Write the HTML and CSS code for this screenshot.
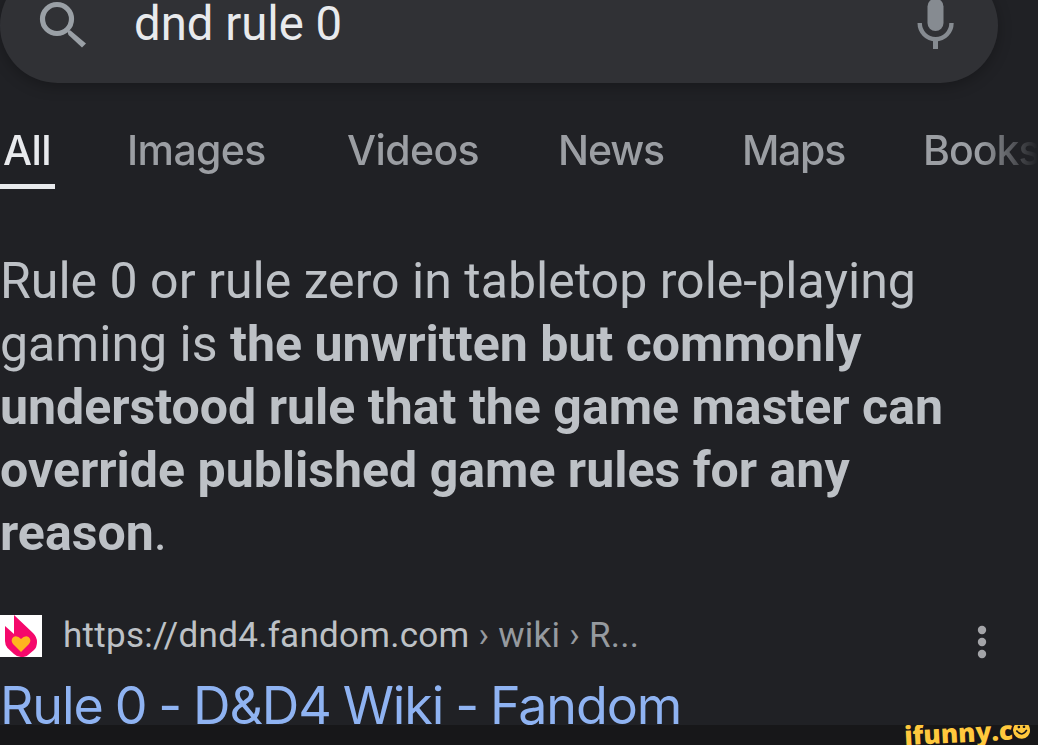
FILE: index.html
```html
<!DOCTYPE html>
<html lang="en">
<head>
    <meta charset="UTF-8">
    <meta name="viewport" content="width=device-width, initial-scale=1.0">
    <title>dnd rule 0</title>
    <link rel="stylesheet" href="styles.css">
</head>
<body>
    <div class="search-bar">
        <svg class="search-icon" width="48" height="48" viewBox="0 0 48 48">
            <circle cx="19" cy="19" r="14.5" fill="none" stroke="#9aa0a6" stroke-width="5.2"/>
            <path d="M29 30 L32.5 30.5 L48 43.5 L44 47.5 L30.5 35 Z" fill="#9aa0a6"/>
        </svg>
        <span class="query">dnd rule 0</span>
        <svg class="mic-icon" width="38" height="56" viewBox="0 0 38 56">
            <rect x="10.5" y="4.5" width="16" height="32.5" rx="8" fill="#868b91"/>
            <path d="M2.7 29 A15.9 16.2 0 0 0 34.5 29" fill="none" stroke="#868b91" stroke-width="4.4"/>
            <path d="M18.5 44 V55" stroke="#868b91" stroke-width="5"/>
        </svg>
    </div>

    <nav class="tabs">
        <a class="tab active">All</a>
        <a class="tab images">Images</a>
        <a class="tab videos">Videos</a>
        <a class="tab news">News</a>
        <a class="tab maps">Maps</a>
        <a class="tab books">Books</a>
    </nav>

    <main>
        <p class="snippet">
            <span class="line">Rule 0 or rule zero in tabletop role-playing</span>
            <span class="line">gaming is <b>the unwritten but commonly</b></span>
            <span class="line"><b>understood rule that the game master can</b></span>
            <span class="line"><b>override published game rules for any</b></span>
            <span class="line"><b>reason</b>.</span>
        </p>
        <div class="source">
            <svg class="favicon" width="42" height="42" viewBox="0 0 42 42">
                <rect width="42" height="42" fill="#fff"/>
                <path d="M14 0 L33 18 Q37 22 37 27 Q37 32 34 35 L28 40 Q26 42 21 42 Q17 42 14 39 L7.5 33 Q5 30 5 26 V11 L14 19 Z" fill="#f5086b"/>
                <path d="M21 37 L13 29 Q10 25 13.5 22 Q17 20 21 24 Q25 20 28.5 22 Q32 25 29 29 Z" fill="#ffb41f"/>
            </svg>
            <span class="url">https://dnd4.fandom.com <span class="crumbs">› wiki › R...</span></span>
            <svg class="more" width="10" height="34" viewBox="0 0 10 34" fill="#a3a4a8">
                <circle cx="5" cy="5" r="4.2"/>
                <circle cx="5" cy="17" r="4.2"/>
                <circle cx="5" cy="29" r="4.2"/>
            </svg>
        </div>
        <h3 class="title">Rule 0 - D&amp;D4 Wiki - Fandom</h3>
    </main>

    <footer class="footer">
        <div class="brand">
            <span class="brand-text">ifunny.c</span>
            <svg class="smiley" width="18" height="18" viewBox="0 0 18 18">
                <circle cx="9" cy="9" r="9" fill="#ffc83d"/>
                <circle cx="6.3" cy="5.6" r="1.4" fill="#171719"/>
                <circle cx="11.7" cy="5.6" r="1.4" fill="#171719"/>
                <path d="M3.5 9 Q9 17 14.5 9" fill="none" stroke="#171719" stroke-width="1.6"/>
            </svg>
        </div>
    </footer>
</body>
</html>
```
FILE: styles.css
```css
* {
    box-sizing: border-box;
}
body {
    margin: 0;
    width: 1038px;
    height: 745px;
    overflow: hidden;
    display: flex;
    flex-direction: column;
    background: #202125;
    font-family: Roboto, sans-serif;
    color: #bdc1c6;
}
.search-bar {
    flex: none;
    display: flex;
    align-items: flex-start;
    width: 998px;
    height: 115px;
    margin-top: -32px;
    padding: 32px 43px 0 38px;
    background: #303135;
    border-radius: 58px;
    box-shadow: 0 4px 14px rgba(0, 0, 0, 0.25);
}
.query {
    margin-left: 48px;
    font-size: 47.3px;
    line-height: 56px;
    margin-top: -4px;
    color: #e8eaed;
    white-space: nowrap;
}
.mic-icon {
    margin-left: auto;
    margin-top: -6px;
}
.tabs {
    flex: none;
    display: flex;
    height: 106px;
    padding-top: 37px;
    font-family: Inter, sans-serif;
    font-size: 41px;
    font-weight: 500;
    letter-spacing: -0.6px;
    line-height: 60px;
    color: #9b9ea3;
    -webkit-mask-image: linear-gradient(to right, #000 980px, transparent 1038px);
    mask-image: linear-gradient(to right, #000 980px, transparent 1038px);
}
.tab {
    flex: none;
    white-space: nowrap;
}
.active {
    width: 55px;
    height: 69px;
    padding-left: 3px;
    margin-right: 72px;
    color: #e8eaed;
    border-bottom: 5px solid #e8eaed;
}
.images {
    width: 220px;
}
.videos {
    width: 211px;
}
.news {
    width: 184px;
    letter-spacing: -1.1px;
}
.maps {
    width: 181px;
    letter-spacing: -1.3px;
}
.books {
    letter-spacing: -1px;
}
main {
    flex: none;
    height: 536px;
    overflow: hidden;
    padding-top: 61px;
}
.snippet {
    margin: 0;
    font-size: 50.05px;
    line-height: 63px;
}
.line {
    display: block;
    white-space: nowrap;
}
.source {
    display: flex;
    height: 42px;
    margin-top: 50px;
    align-items: center;
}
.url {
    margin-left: 21px;
    font-size: 35px;
    letter-spacing: 0.27px;
    line-height: 42px;
    white-space: nowrap;
}
.crumbs {
    color: #969a9f;
}
.more {
    margin-left: auto;
    margin-right: 51px;
    margin-top: 12px;
}
.title {
    margin: 17px 0 0;
    font-family: Inter, sans-serif;
    font-size: 52px;
    font-weight: 400;
    letter-spacing: -1.1px;
    word-spacing: -1.6px;
    line-height: 64px;
    white-space: nowrap;
    color: #8fb3f2;
}
.footer {
    flex: none;
    height: 20px;
    background: #171719;
    overflow: hidden;
}
.brand {
    display: flex;
    width: 126px;
    margin-top: -4px;
    margin-left: 904px;
    align-items: center;
    transform: rotate(-3deg);
}
.smiley {
    margin-top: 3px;
}
.brand-text {
    font-family: "Open Sans", sans-serif;
    font-size: 26px;
    font-weight: 800;
    line-height: 20px;
    color: #ffc83d;
}
```
